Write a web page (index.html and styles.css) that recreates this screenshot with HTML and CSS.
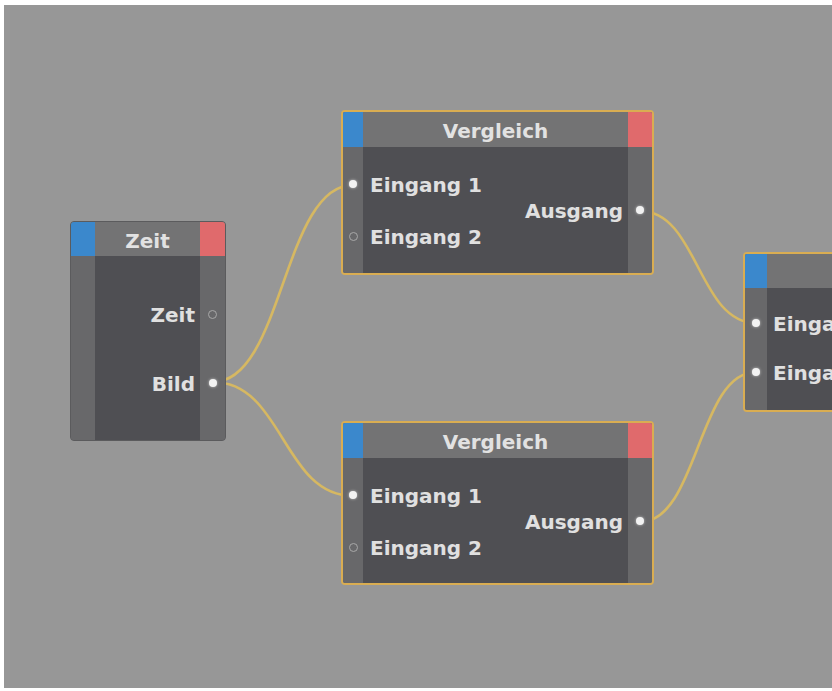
FILE: index.html
```html
<!DOCTYPE html>
<html lang="de">
<head>
<meta charset="utf-8">
<title>Node Editor</title>
<link rel="stylesheet" href="styles.css">
</head>
<body>
<div class="canvas">
  <svg class="wires" width="828" height="683" viewBox="0 0 828 683">
    <path d="M209 377 C279 377, 279 180, 349 180"/>
    <path d="M209 377 C279 377, 279 491, 349 491"/>
    <path d="M636 206 C694 206, 694 318, 752 318"/>
    <path d="M636 517 C694 517, 694 367, 752 367"/>
  </svg>

  <div class="node node-zeit">
    <div class="head">
      <span class="cap cap-in"></span>
      <span class="title">Zeit</span>
      <span class="cap cap-out"></span>
    </div>
    <div class="body">
      <div class="row">
        <span class="pcell"></span>
        <span class="label out">Zeit</span>
        <span class="pcell"><i class="dot hollow"></i></span>
      </div>
      <div class="row">
        <span class="pcell"></span>
        <span class="label out">Bild</span>
        <span class="pcell"><i class="dot"></i></span>
      </div>
    </div>
  </div>

  <div class="node node-cmp sel node-top">
    <div class="head">
      <span class="cap cap-in"></span>
      <span class="title">Vergleich</span>
      <span class="cap cap-out"></span>
    </div>
    <div class="body">
      <div class="row">
        <span class="pcell"><i class="dot"></i></span>
        <span class="label">Eingang 1</span>
        <span class="pcell"></span>
      </div>
      <div class="row">
        <span class="pcell"></span>
        <span class="label out">Ausgang</span>
        <span class="pcell"><i class="dot"></i></span>
      </div>
      <div class="row">
        <span class="pcell"><i class="dot hollow"></i></span>
        <span class="label">Eingang 2</span>
        <span class="pcell"></span>
      </div>
    </div>
  </div>

  <div class="node node-cmp sel node-bottom">
    <div class="head">
      <span class="cap cap-in"></span>
      <span class="title">Vergleich</span>
      <span class="cap cap-out"></span>
    </div>
    <div class="body">
      <div class="row">
        <span class="pcell"><i class="dot"></i></span>
        <span class="label">Eingang 1</span>
        <span class="pcell"></span>
      </div>
      <div class="row">
        <span class="pcell"></span>
        <span class="label out">Ausgang</span>
        <span class="pcell"><i class="dot"></i></span>
      </div>
      <div class="row">
        <span class="pcell"><i class="dot hollow"></i></span>
        <span class="label">Eingang 2</span>
        <span class="pcell"></span>
      </div>
    </div>
  </div>

  <div class="node node-right sel">
    <div class="head">
      <span class="cap cap-in"></span>
      <span class="title"></span>
      <span class="cap cap-out"></span>
    </div>
    <div class="body">
      <div class="row">
        <span class="pcell"><i class="dot"></i></span>
        <span class="label">Eingang 1</span>
        <span class="pcell"></span>
      </div>
      <div class="row">
        <span class="pcell"><i class="dot"></i></span>
        <span class="label">Eingang 2</span>
        <span class="pcell"></span>
      </div>
    </div>
  </div>
</div>
</body>
</html>
```
FILE: styles.css
```css
html, body {
  margin: 0;
  padding: 0;
  background: #ffffff;
}

body {
  font-family: "DejaVu Sans", Verdana, sans-serif;
  padding: 5px 0 3px 4px;
}

.canvas {
  position: relative;
  width: 828px;
  height: 683px;
  background: #979797;
  overflow: hidden;
}

.wires {
  position: absolute;
  left: 0;
  top: 0;
}

.wires path {
  fill: none;
  stroke: #d6b862;
  stroke-width: 2.6;
}

.node {
  --lw: 20px;
  --rw: 24px;
  --hh: 35px;
  position: absolute;
  box-sizing: border-box;
  display: flex;
  flex-direction: column;
  border-radius: 4px;
  overflow: hidden;
  border: 1px solid #5b5b5d;
  background: #68686a;
}

.node.sel {
  border: 2px solid #d9ad52;
}

.head {
  display: flex;
  height: var(--hh);
  flex: none;
  background: #737374;
}

.cap {
  flex: none;
}

.cap-in {
  width: var(--lw);
  background: #3b88cc;
}

.cap-out {
  width: var(--rw);
  background: #e06a6c;
}

.title {
  flex: 1;
  text-align: center;
  color: #e2e2e2;
  font-size: 20px;
  font-weight: bold;
  line-height: var(--hh);
  padding-top: 2px;
}

.body {
  flex: 1;
  display: flex;
  flex-direction: column;
  background: linear-gradient(to right,
    #68686a var(--lw), #4f4f53 var(--lw),
    #4f4f53 calc(100% - var(--rw)), #68686a calc(100% - var(--rw)));
}

.row {
  display: flex;
  height: 26px;
  align-items: center;
}

.pcell {
  flex: none;
  width: var(--lw);
  height: 100%;
  display: flex;
  align-items: center;
  justify-content: center;
}

.pcell:last-child {
  width: var(--rw);
}

.label {
  flex: 1;
  color: #e0e0e0;
  font-size: 20px;
  font-weight: bold;
  white-space: nowrap;
  padding-left: 7px;
  padding-top: 2px;
}

.label.out {
  text-align: right;
  padding-left: 0;
  padding-right: 5px;
}

.dot {
  display: block;
  width: 8px;
  height: 8px;
  border-radius: 50%;
  background: #f2f2f2;
  box-shadow: 0 0 3px rgba(255, 255, 255, 0.6);
}

.dot.hollow {
  box-sizing: border-box;
  width: 9px;
  height: 9px;
  background: transparent;
  border: 1px solid #a8a8a8;
  box-shadow: none;
}

/* Zeit node */
.node-zeit {
  --lw: 24px;
  --rw: 25px;
  --hh: 34px;
  left: 66px;
  top: 216px;
  width: 156px;
  height: 220px;
}

.node-zeit .body {
  padding-top: 45px;
  gap: 43px;
}

/* Vergleich nodes */
.node-cmp {
  --lw: 20px;
  --rw: 24px;
  --hh: 35px;
  left: 337px;
  width: 313px;
  height: 165px;
}

.node-cmp .body {
  padding-top: 24px;
}

.node-top {
  top: 105px;
}

.node-bottom {
  top: 416px;
  height: 164px;
}

/* partially visible node on the right */
.node-right {
  --lw: 22px;
  --rw: 24px;
  --hh: 34px;
  left: 739px;
  top: 247px;
  width: 160px;
  height: 160px;
}

.node-right .body {
  padding-top: 22px;
  gap: 23px;
}

.node-right .label {
  padding-left: 6px;
}
```
